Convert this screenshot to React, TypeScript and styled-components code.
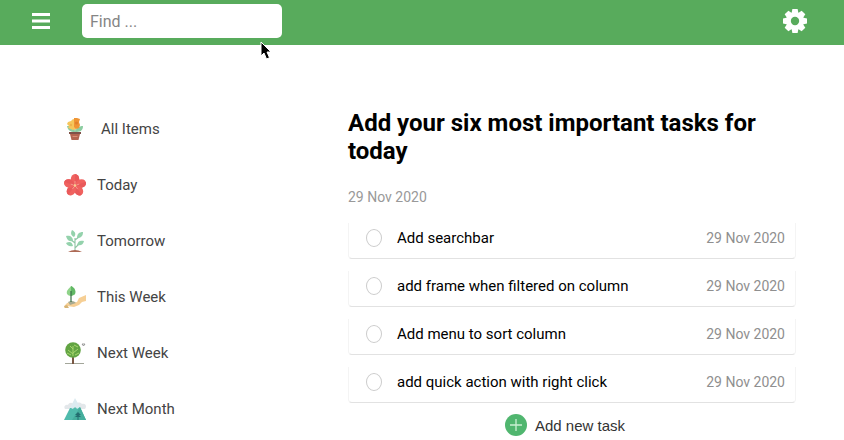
import React from "react";
import styled, { createGlobalStyle } from "styled-components";

const GlobalStyle = createGlobalStyle`
  *, *::before, *::after { box-sizing: border-box; }
  body { margin: 0; background: #fff; color: #000; overflow: hidden; font-family: Roboto, "Liberation Sans", sans-serif; font-size: 15px; }
  button, input { font-family: inherit; }
`;

const Header = styled.header`
  position: relative;
  display: flex;
  align-items: center;
  height: 45px;
  padding: 0 36px 3px 31px;
  background: #58ab5c;
`;

const IconButton = styled.button`
  display: flex;
  padding: 0;
  border: 0;
  background: none;
  color: #fff;
  cursor: pointer;
`;

const Search = styled.input`
  width: 200px;
  height: 34px;
  margin: 0 auto 0 31px;
  padding: 0 8px;
  border: 0;
  border-radius: 5px;
  background: #fff;
  font-size: 16px;
  color: #333;
  outline: 0;
  &::placeholder { color: #858585; opacity: 1; }
`;

const Pointer = styled.svg`
  position: absolute;
  left: 259px;
  top: 41px;
`;

const Page = styled.div`
  display: grid;
  grid-template-columns: 284px minmax(0, 1fr);
  padding: 56px 48px 0 64px;
`;

const Menu = styled.ul`
  margin: 0;
  padding: 0;
  list-style: none;
`;

const MenuLink = styled.a<{ $wide?: boolean }>`
  display: flex;
  align-items: center;
  gap: ${(p) => (p.$wide ? 15 : 11)}px;
  height: 56px;
  color: #444;
  text-decoration: none;
`;

const Title = styled.h1`
  margin: 8px 0 0;
  font-size: 24px;
  line-height: 28px;
  font-weight: 700;
`;

const Day = styled.time`
  display: block;
  margin: 24px 0 18px;
  color: #999;
  font-size: 14px;
  line-height: 16px;
`;

const Tasks = styled.ul`
  display: flex;
  flex-direction: column;
  gap: 12px;
  margin: 0;
  padding: 0;
  list-style: none;
`;

const Task = styled.li`
  display: flex;
  align-items: center;
  height: 36px;
  padding: 0 10px 6px 17px;
  border: solid #f4f4f4;
  border-width: 0 1px 1px;
  border-bottom-color: #e2e2e2;
  border-radius: 0 0 4px 4px;
`;

const TaskLabel = styled.label`
  display: flex;
  flex: 1;
  align-items: center;
  gap: 15px;
`;

const Check = styled.input`
  appearance: none;
  width: 16px;
  height: 18px;
  margin: 0;
  border: 1px solid #ccc;
  border-radius: 50%;
  &:checked { background: #58ab5c; }
`;

const Due = styled.time`
  color: #8f8f8f;
  font-size: 14px;
`;

const AddButton = styled.button`
  display: flex;
  align-items: center;
  gap: 8px;
  margin: 11px auto 0;
  padding: 0 14px 0 0;
  border: 0;
  background: none;
  color: #333;
  font-family: "Liberation Sans", Arial, sans-serif;
  font-size: 15px;
  cursor: pointer;
`;

const Bars = () => (
  <svg width="20" height="20" viewBox="0 0 20 20" fill="currentColor" aria-hidden="true">
    <path d="M1 2h18v3H1zM1 8.5h18v3H1zM1 15h18v3H1z" />
  </svg>
);

const Gear = () => (
  <svg width="26" height="26" viewBox="-13 -13 26 26" fill="currentColor" aria-hidden="true">
    {[0, 45, 90, 135].map((a) => (
      <path key={a} transform={`rotate(${a})`} d="M-2.6-12h5.200l.9 4.5v15L2.6 12h-5.200l-.9-4.5v-15z" />
    ))}
    <circle r="9" />
    <circle r="4.2" fill="#58ab5c" />
  </svg>
);

const Pot = () => (
  <>
    <path d="M11 15V8" stroke="#6fa878" strokeWidth="1" />
    <path d="M11 14c-5 0-7-2-8-6 4 0 7 1 8 6zM11 14c1-4 4-6 8-6 0 5-3 6-8 6z" fill="#8ccda1" />
    <path d="M4 4l3-1 2-2 3 1v9l-3 1-2-1-3-1 1-2-2-2z" fill="#f6c65b" />
    <path d="M10 0h3l3 1-1 3 1 3-1 3-3 1-2-2z" fill="#ef9434" />
    <circle cx="12.500" cy="5" r="1.500" fill="#e07f2b" />
    <circle cx="7" cy="7" r="1.200" fill="#eeb24b" />
    <path d="M6 16h10l-1.500 6h-7z" fill="#b4654f" />
    <path d="M5 14h12v2H5z" fill="#805148" />
    <path d="M8 18h6l-1 1H9z" fill="#d98d76" />
  </>
);

const Flower = () => (
  <>
    {[0, 72, 144, 216, 288].map((a) => (
      <g key={a} transform={`rotate(${a} 11 11.500)`}>
        <ellipse cx="11" cy="5.300" rx="4.200" ry="5.200" fill="#f0625f" />
        <path d="M11 11V.2c3 0 4.200 2.500 4.200 5.100S13 10 11 11z" fill="#e9595a" />
        <path d="M11 10V7" stroke="#f8b8a4" strokeWidth=".6" />
      </g>
    ))}
    <circle cx="11" cy="11.500" r="1.200" fill="#f9d08a" />
  </>
);

const Sprout = () => (
  <>
    <path d="M11 21V8M11 18l5-5M11 13 6 9M11 10l4-3" stroke="#8fc5a4" strokeWidth="1.100" fill="none" />
    <path d="M10 7C6 5 7 2 8 0c4 2 4 5 2 7zM9 11C4 12 3 9 2 6c4-1 7 1 7 5zM13 8c0-4 2-6 6-6 0 4-2 6-6 6zM9 16c-4 1-6-1-7-3 4-2 6-1 7 3zM13 15c1-4 3-5 7-4-1 4-3 5-7 4z" fill="#94d2ac" />
    <path d="M4 22q7-4 14 0z" fill="#ad6a55" />
  </>
);

const Hand = () => (
  <>
    <path d="M0 21c2-4 5-6 9-4l4-1 2-4 7-3v6l-4 1-3 3-5 2-7-1-2 2z" fill="#f6cf95" />
    <path d="M4 16c4-2 6-1 8 1l-6 2z" fill="#a7aa91" />
    <path d="m0 20 3-1 2 3H1z" fill="#d6b475" />
    <path d="M7 0c4 2 5 5 4 8-1 2-6 3-8 0C2 4 5 3 7 0z" fill="#8fd389" />
    <path d="M7 0c4 2 5 5 4 8l-4 2z" fill="#62b866" />
    <path d="M7 16V5" stroke="#386f47" strokeWidth="1.200" />
  </>
);

const Tree = () => (
  <>
    <path d="M1 21.500h19" stroke="#8c8f80" strokeWidth=".8" />
    <path d="M8 22V11h2v11z" fill="#795744" />
    <circle cx="9" cy="8" r="7.800" fill="#62a443" />
    <path d="M9 14V4m0 8-5-4m5 3 5-4M9 7 6 4M3 11l4 2m8-2-4 2M10 3l4 2" stroke="#a8d66d" strokeWidth="1" fill="none" />
    <path d="m18 2 1.500 2L21 2m-3 0h3" stroke="#777" strokeWidth=".7" fill="none" />
  </>
);

const Mountain = () => (
  <>
    <path d="M1 11c-2-3 1-5 3-4 1-3 5-3 6 0 2-3 6-3 8-1 4-1 5 3 3 5z" fill="#e3e7ea" />
    <path d="M0 22 6 10l10-1 6 13z" fill="#50bbac" />
    <path d="m6 10 5-10 5 9-3 2-2-3-2 3-2-1z" fill="#dcebf0" />
    <path d="M8 22 16 9l6 13z" fill="#45ae9d" />
    <path d="m14 14-3 3h2l-2 2h2.500v3h1v-3H17l-2-2h2z" fill="#236e70" />
  </>
);

const menu = [
  { name: "All Items", Art: Pot, wide: true },
  { name: "Today", Art: Flower },
  { name: "Tomorrow", Art: Sprout },
  { name: "This Week", Art: Hand },
  { name: "Next Week", Art: Tree },
  { name: "Next Month", Art: Mountain },
];

const tasks = [
  "Add searchbar",
  "add frame when filtered on column",
  "Add menu to sort column",
  "add quick action with right click",
];

export default function App() {
  return (
    <>
      <GlobalStyle />
      <Header>
        <IconButton aria-label="Toggle menu"><Bars /></IconButton>
        <Search type="text" aria-label="Find" placeholder="Find ..." />
        <IconButton aria-label="Settings"><Gear /></IconButton>
        <Pointer width="14" height="20" viewBox="0 0 14 20" aria-hidden="true">
          <path d="M2 1v14l3-3 2.500 6 3-1.300L8 11h4z" fill="#000" stroke="#fff" />
        </Pointer>
      </Header>
      <Page>
        <nav aria-label="Lists">
          <Menu>
            {menu.map(({ name, Art, wide }) => (
              <li key={name}>
                <MenuLink href="#" $wide={wide}>
                  <svg width="22" height="22" viewBox="0 0 22 22" fill="none" aria-hidden="true"><Art /></svg>
                  {name}
                </MenuLink>
              </li>
            ))}
          </Menu>
        </nav>
        <main>
          <Title>Add your six most important tasks for today</Title>
          <Day dateTime="2020-11-29">29 Nov 2020</Day>
          <Tasks>
            {tasks.map((name) => (
              <Task key={name}>
                <TaskLabel><Check type="checkbox" />{name}</TaskLabel>
                <Due dateTime="2020-11-29">29 Nov 2020</Due>
              </Task>
            ))}
          </Tasks>
          <AddButton>
            <svg width="22" height="22" viewBox="0 0 22 22" aria-hidden="true">
              <circle cx="11" cy="11" r="11" fill="#50b66f" />
              <path d="M11 5v12M5 11h12" stroke="#c9f0d2" strokeWidth="1.300" />
            </svg>
            Add new task
          </AddButton>
        </main>
      </Page>
    </>
  );
}
